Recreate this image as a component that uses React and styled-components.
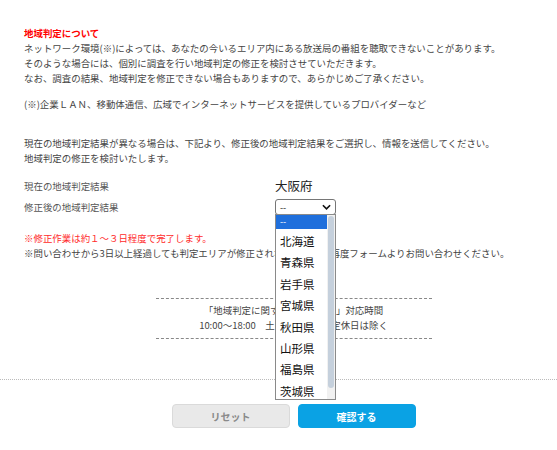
import React from "react";
import styled, { createGlobalStyle } from "styled-components";

const GlobalStyle = createGlobalStyle`
  html, body {
    margin: 0;
    background: #fff;
  }
  body {
    font-family: "Noto Sans CJK JP", "Noto Sans", sans-serif;
    color: #444;
  }
`;

const prefectures = [
  "北海道",
  "青森県",
  "岩手県",
  "宮城県",
  "秋田県",
  "山形県",
  "福島県",
  "茨城県",
  "栃木県",
];

export default function App() {
  return (
    <Page>
      <GlobalStyle />
      <Content>
        <Title>地域判定について</Title>
        <Para>
          ネットワーク環境(※)によっては、あなたの今いるエリア内にある放送局の番組を聴取できないことがあります。
          <br />
          そのような場合には、個別に調査を行い地域判定の修正を検討させていただきます。
          <br />
          なお、調査の結果、地域判定を修正できない場合もありますので、あらかじめご了承ください。
        </Para>
        <Para $top={11}>
          (※)企業ＬＡＮ、移動体通信、広域でインターネットサービスを提供しているプロバイダーなど
        </Para>
        <Para $top={24}>
          現在の地域判定結果が異なる場合は、下記より、修正後の地域判定結果をご選択し、情報を送信してください。
          <br />
          地域判定の修正を検討いたします。
        </Para>

        <Form>
          <Label>現在の地域判定結果</Label>
          <Current>大阪府</Current>
          <Label>修正後の地域判定結果</Label>
          <SelectWrap>
            <SelectBox>
              <span>--</span>
              <svg width="9" height="6" viewBox="0 0 10 6">
                <path d="M1 1l4 4 4-4" fill="none" stroke="#111" strokeWidth="1.8" />
              </svg>
            </SelectBox>
            <ListBox>
              <Option $selected>--</Option>
              {prefectures.map((p) => (
                <Option key={p}>{p}</Option>
              ))}
              <ScrollTrack>
                <ScrollThumb />
              </ScrollTrack>
            </ListBox>
          </SelectWrap>
        </Form>

        <Notes>
          <Para $red>※修正作業は約１～３日程度で完了します。</Para>
          <Para>
            ※問い合わせから3日以上経過しても判定エリアが修正されない場合は、再度フォームよりお問い合わせください。
          </Para>
        </Notes>
      </Content>

      <Center>
        <Hours>
          「地域判定に関する問い合わせ」対応時間
          <br />
          10:00～18:00　土日祝・当社指定休日は除く
        </Hours>
      </Center>

      <Divider />

      <Center>
        <Buttons>
          <Button type="button">リセット</Button>
          <Button type="button" $primary>
            確認する
          </Button>
        </Buttons>
      </Center>
    </Page>
  );
}

const Page = styled.div`
  padding-top: 26px;
  width: 557px;
  height: 450px;
  overflow: hidden;
  box-sizing: border-box;
`;

const Content = styled.div`
  padding: 0 24px;
`;

const Title = styled.h2`
  margin: 0;
  font-size: 9.45px;
  line-height: 15px;
  font-weight: bold;
  color: #ff0000;
`;

const Para = styled.p`
  margin: ${(p) => p.$top || 0}px 0 0;
  font-size: 9.45px;
  line-height: 15px;
  color: ${(p) => (p.$red ? "#ff2b2b" : "#444")};
  white-space: nowrap;
`;

const Form = styled.div`
  margin-top: 9px;
  display: grid;
  grid-template-columns: 251px auto;
  grid-auto-rows: 21px;
  align-items: center;
`;

const Label = styled.div`
  font-size: 9.45px;
  color: #555;
`;

const Current = styled.div`
  font-size: 12.5px;
  color: #222;
`;

const SelectWrap = styled.div`
  position: relative;
  align-self: start;
  margin-top: 3px;
  width: 61px;
`;

const SelectBox = styled.div`
  box-sizing: border-box;
  height: 16px;
  display: flex;
  align-items: center;
  justify-content: space-between;
  padding: 0 4px 0 4px;
  border: 1px solid #767676;
  border-radius: 3px;
  background: #fff;
  font-size: 9px;
  color: #222;
`;

const ListBox = styled.div`
  position: absolute;
  top: 15px;
  left: 0;
  z-index: 5;
  box-sizing: border-box;
  width: 61px;
  height: 186px;
  background: #fff;
  border: 1px solid #8a8a8a;
  overflow: hidden;
  padding-right: 8px;
`;

const Option = styled.div`
  height: ${(p) => (p.$selected ? "14px" : "21.4px")};
  margin-bottom: ${(p) => (p.$selected ? "2px" : "0")};
  line-height: ${(p) => (p.$selected ? "14px" : "21.4px")};
  padding-left: 4px;
  font-size: ${(p) => (p.$selected ? "9px" : "11.5px")};
  color: ${(p) => (p.$selected ? "#fff" : "#111")};
  background: ${(p) => (p.$selected ? "#1f6fdc" : "transparent")};
  white-space: nowrap;
`;

const ScrollTrack = styled.div`
  position: absolute;
  top: 0;
  right: 0;
  bottom: 0;
  width: 8px;
  background: #f1f1f1;
`;

const ScrollThumb = styled.div`
  margin: 1px 1px 0 1px;
  height: 172px;
  border-radius: 3px;
  background: #c5d0dc;
`;

const Notes = styled.div`
  margin-top: 14px;
`;

const Center = styled.div`
  display: flex;
  justify-content: center;
  padding-left: 30px;
`;

const Hours = styled.div`
  margin-top: 37px;
  width: 276px;
  padding: 4px 0 5px;
  border-top: 1px dashed #888;
  border-bottom: 1px dashed #888;
  text-align: center;
  font-size: 9.45px;
  line-height: 15px;
  color: #444;
  white-space: nowrap;
`;

const Divider = styled.div`
  margin-top: 40px;
  border-top: 1px dotted #bbb;
`;

const Buttons = styled.div`
  margin-top: 24px;
  display: flex;
  gap: 8px;
`;

const Button = styled.button`
  width: 118px;
  height: 24px;
  border-radius: 4px;
  border: 1px solid ${(p) => (p.$primary ? "#0aa2e4" : "#dadada")};
  background: ${(p) => (p.$primary ? "#0aa2e4" : "#e9e9e9")};
  color: ${(p) => (p.$primary ? "#fff" : "#8a8a8a")};
  font-family: "Noto Sans CJK JP", sans-serif;
  font-size: 10px;
  font-weight: bold;
  cursor: pointer;
`;
